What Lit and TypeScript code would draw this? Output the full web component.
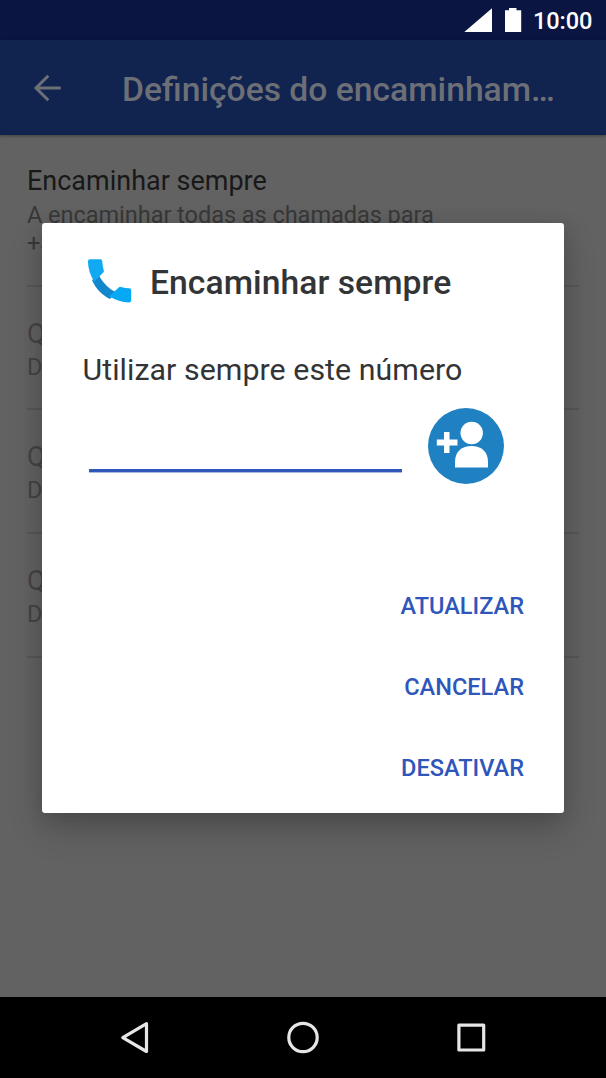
import { LitElement, html, css } from "lit";
import { customElement } from "lit/decorators.js";

@customElement("status-bar")
class StatusBar extends LitElement {
  static styles = css`
    :host { display: flex; justify-content: flex-end; height: 40px; background: #0a1542; color: #fff; }
    svg { display: block; width: 70px; height: 40px; flex: none; }
    .clock { width: 73px; font-size: 23.57px; font-weight: 500; line-height: 43px; letter-spacing: -0.1px; white-space: nowrap; }
  `;
  render() {
    return html`
      <svg viewBox="463 0 70 40" fill="#fff">
        <path d="M464.3 32H492V8.3z" />
        <path d="M505 10.3h4V8h7.5v2.3h4.7V32H505z" />
      </svg>
      <div class="clock">10:00</div>
    `;
  }
}

@customElement("tool-bar")
class ToolBar extends LitElement {
  static styles = css`
    :host { display: flex; align-items: center; height: 95px; background: #11234f; color: #6d6f77; box-shadow: 0 1px 3px rgba(0, 0, 0, 0.35); }
    svg { width: 30px; height: 30px; margin: 0 60px 0 32px; flex: none; }
    .title { font-size: 33.67px; font-weight: 500; line-height: 44px; padding-top: 4px; white-space: nowrap; }
  `;
  render() {
    return html`
      <svg viewBox="0 0 30 30" fill="none" stroke="#6d6f77" stroke-width="3">
        <path d="M28.700 15H4M16.300 2.800L4 15l12.300 12.200" />
      </svg>
      <div class="title">Definições do encaminham…</div>
    `;
  }
}

@customElement("call-dialog")
class CallDialog extends LitElement {
  static styles = css`
    :host { display: flex; flex-direction: column; box-sizing: border-box; width: 522px; height: 590.4px; background: #fff; border-radius: 3px; color: #333436;
      box-shadow: 0 16px 34px rgba(0, 0, 0, 0.19), 0 4px 20px rgba(0, 0, 0, 0.12); }
    .head { display: flex; align-items: center; height: 119px; padding-left: 45px; }
    .phone { width: 46px; height: 46px; margin: 0 17px 4px 0; flex: none; }
    .title { font-size: 33.67px; font-weight: 500; line-height: 40px; letter-spacing: 0.05px; white-space: nowrap; }
    .message { margin: 10px 0 0 40.5px; font-size: 30.3px; line-height: 36px; letter-spacing: 0.06px; white-space: nowrap; }
    .entry { display: flex; height: 76px; margin: 20px 0 0 47px; }
    .field { width: 313px; height: 61px; border-bottom: 3px solid #2f56bb; box-shadow: 0 1px #a9b9e2; margin-right: 26px; }
    .add { width: 76px; height: 76px; }
    .actions { display: flex; flex-direction: column; align-items: flex-end; margin: 82px 40px 0 0; }
    .action { height: 81px; line-height: 81px; font-size: 23.57px; font-weight: 500; color: #2f56bb; white-space: nowrap; }
  `;
  render() {
    return html`
      <div class="head">
        <svg class="phone" viewBox="0 0 46 46">
          <path fill="#1287cc" d="M12 17.5C16 25 21.5 30.5 29 34.3L23 41C15 37 8.500 30.500 5 22z" />
          <path fill="#12a9f3" d="M3.300 1.200H13.500Q15 1.200 15.200 2.700Q15.500 8 16.800 12.200Q17.200 13.500 16.300 14.500L7.300 23.800Q1 13.500 .900 3.200Q.900 1.200 3.300 1.200z" />
          <path fill="#08a9f4" d="M31.700 29.500Q32.500 28.500 34 28.900Q38 30.100 42.300 30.200Q44.200 30.300 44.200 32V42.300Q44.200 44.500 42 44.500Q31.500 44.300 22.300 38.300z" />
        </svg>
        <div class="title">Encaminhar sempre</div>
      </div>
      <div class="message">Utilizar sempre este número</div>
      <div class="entry">
        <div class="field"></div>
        <svg class="add" viewBox="0 0 76 76">
          <circle cx="38" cy="38" r="38" fill="#2081c2" />
          <g fill="#fff">
            <circle cx="43.700" cy="25" r="11.200" />
            <path d="M27 59.500V54C27 43.500 34 38 43.500 38S60 43.500 60 54v5.500z" />
            <path d="M16 24h5.500v7.500H29.500v6H21.500V45H16v-7.500H8.800v-6H16z" />
          </g>
        </svg>
      </div>
      <div class="actions">
        ${["ATUALIZAR", "CANCELAR", "DESATIVAR"].map((label) => html`<div class="action">${label}</div>`)}
      </div>
    `;
  }
}

@customElement("nav-bar")
class NavBar extends LitElement {
  static styles = css`
    :host { display: block; height: 81px; background: #000; }
    svg { display: block; width: 606px; height: 81px; }
  `;
  render() {
    return html`
      <svg viewBox="0 997 606 81" fill="none" stroke="#e6e6e6" stroke-width="3.2" stroke-linejoin="round">
        <path d="M122.800 1037.700L146.500 1023.700V1051.500z" />
        <circle cx="303" cy="1037.500" r="14.200" />
        <rect x="458.900" y="1025.200" width="24.800" height="24.800" />
      </svg>
    `;
  }
}

@customElement("app-root")
class AppRoot extends LitElement {
  static styles = css`
    :host { display: flex; flex-direction: column; position: relative; width: 606px; height: 1078px; overflow: hidden; background: #626262; font-family: Roboto, sans-serif; }
    .list { flex: 1; padding: 0 27px; }
    .item { box-sizing: border-box; height: 123.8px; border-bottom: 2px solid #575757; padding-top: 31px; color: #444; white-space: nowrap; }
    .item.first { height: 151.500px; padding-top: 30px; color: #181818; }
    .name { font-size: 26.93px; line-height: 32px; letter-spacing: 0.03px; }
    .detail { font-size: 23.570px; line-height: 28px; margin-top: 3px; letter-spacing: -0.06px; color: #444; }
    .first .detail { margin-top: 4px; color: #383838; }
    .dialog { position: absolute; left: 42px; top: 223px; }
  `;
  render() {
    return html`
      <status-bar></status-bar>
      <tool-bar></tool-bar>
      <div class="list">
        <div class="item first">
          <div class="name">Encaminhar sempre</div>
          <div class="detail">A encaminhar todas as chamadas para<br />+3</div>
        </div>
        ${[0, 1, 2].map(() => html`
          <div class="item">
            <div class="name">Q</div>
            <div class="detail">D</div>
          </div>`)}
      </div>
      <call-dialog class="dialog"></call-dialog>
      <nav-bar></nav-bar>
    `;
  }
}
